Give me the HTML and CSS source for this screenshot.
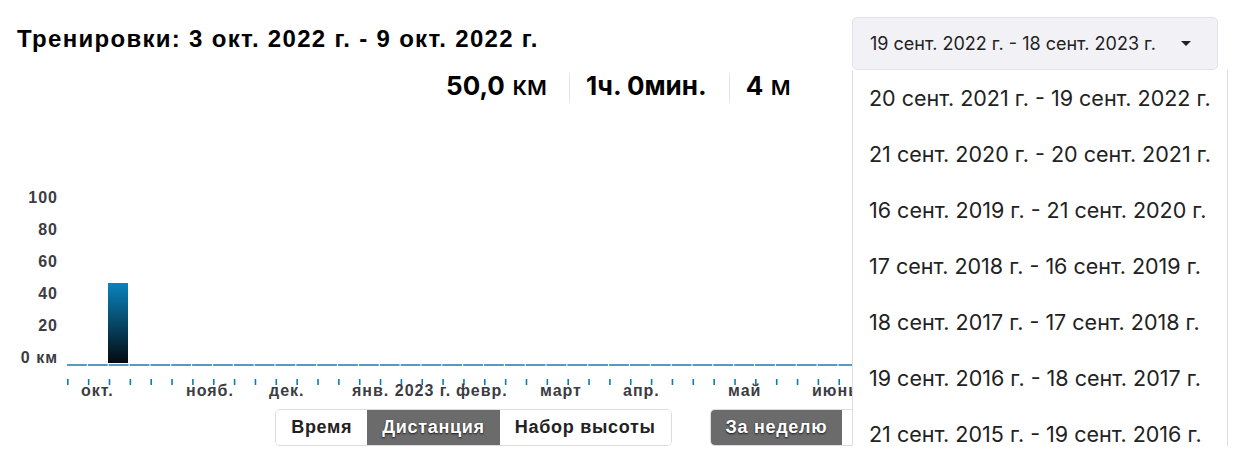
FILE: index.html
```html
<!DOCTYPE html>
<html lang="ru">
<head>
<meta charset="utf-8">
<title>Тренировки</title>
<link rel="stylesheet" href="styles.css">
</head>
<body>
<div class="widget">
  <div class="header">
    <h2 class="title">Тренировки: 3 окт. 2022 г. - 9 окт. 2022 г.</h2>
    <div class="range-select">
      <button class="range-btn" type="button">
        <span>19 сент. 2022 г. - 18 сент. 2023 г.</span>
        <svg class="caret" width="10" height="5" viewBox="0 0 10 5"><path d="M0 0H10L5 5Z" fill="#222"/></svg>
      </button>
      <ul class="range-menu">
        <li>20 сент. 2021 г. - 19 сент. 2022 г.</li>
        <li>21 сент. 2020 г. - 20 сент. 2021 г.</li>
        <li>16 сент. 2019 г. - 21 сент. 2020 г.</li>
        <li>17 сент. 2018 г. - 16 сент. 2019 г.</li>
        <li>18 сент. 2017 г. - 17 сент. 2018 г.</li>
        <li>19 сент. 2016 г. - 18 сент. 2017 г.</li>
        <li>21 сент. 2015 г. - 19 сент. 2016 г.</li>
      </ul>
    </div>
  </div>

  <div class="stats">
    <div class="stat"><b>50,0</b> <span class="unit">км</span></div>
    <div class="stat"><b>1ч. 0мин.</b></div>
    <div class="stat"><b>4</b> <span class="unit">м</span></div>
  </div>

  <svg class="chart" width="1248" height="297" viewBox="0 103 1248 297">
    <defs>
      <linearGradient id="barGrad" x1="0" y1="0" x2="0" y2="1">
        <stop offset="0" stop-color="#0a84be"/>
        <stop offset="1" stop-color="#030b10"/>
      </linearGradient>
    </defs>
    <g class="ylabels">
      <text x="58" y="203">100</text>
      <text x="58" y="235">80</text>
      <text x="58" y="267">60</text>
      <text x="58" y="299">40</text>
      <text x="58" y="331">20</text>
      <text x="58" y="363">0 км</text>
    </g>
    <rect x="108" y="283" width="20" height="80" fill="url(#barGrad)"/>
    <line class="axis" x1="67" y1="365" x2="1218" y2="365"/>
    <g class="ticks" id="ticks"></g>
    <g class="xlabels">
      <text x="81" y="396">окт.</text>
      <text x="186" y="396">нояб.</text>
      <text x="269" y="396">дек.</text>
      <text x="352" y="396">янв. 2023 г.</text>
      <text x="456" y="396">февр.</text>
      <text x="540" y="396">март</text>
      <text x="623" y="396">апр.</text>
      <text x="728" y="396">май</text>
      <text x="812" y="396">июнь</text>
    </g>
  </svg>

  <div class="controls">
    <div class="seg">
      <button class="seg-btn" type="button">Время</button>
      <button class="seg-btn active" type="button">Дистанция</button>
      <button class="seg-btn" type="button">Набор высоты</button>
    </div>
    <div class="seg">
      <button class="seg-btn active" type="button">За неделю</button>
      <button class="seg-btn" type="button">За месяц</button>
    </div>
  </div>
</div>
<script>
  (function () {
    var g = document.getElementById('ticks');
    var ns = 'http://www.w3.org/2000/svg';
    for (var i = 0; i < 56; i++) {
      var x = 67 + i * 20.85;
      var r = document.createElementNS(ns, 'rect');
      r.setAttribute('x', x.toFixed(2));
      r.setAttribute('y', '379');
      r.setAttribute('width', '1.6');
      r.setAttribute('height', '6');
      g.appendChild(r);
    }
  })();
</script>
</body>
</html>
```

FILE: styles.css
```css
html, body {
  margin: 0;
  padding: 0;
  overflow: hidden;
  background: #ffffff;
}

body {
  font-family: "Liberation Sans", Arial, sans-serif;
  color: #111;
}

.widget {
  padding: 17px 30px 0 17px;
}

.header {
  display: flex;
  justify-content: space-between;
  align-items: flex-start;
  height: 53px;
}

.title {
  margin: 9px 0 0 0;
  font-size: 24px;
  line-height: 26px;
  font-weight: 700;
  letter-spacing: 1.3px;
  color: #000;
  white-space: nowrap;
}

.range-select {
  position: relative;
  width: 366px;
}

.range-btn {
  display: flex;
  align-items: center;
  justify-content: space-between;
  width: 366px;
  height: 53px;
  box-sizing: border-box;
  padding: 0 26px 0 17px;
  background: #f2f1f6;
  border: 1px solid #e3e2ea;
  border-radius: 5px;
  font-family: Inter, "Noto Sans", sans-serif;
  font-size: 18px;
  color: #222;
  white-space: nowrap;
}

.caret {
  display: block;
}

.range-menu {
  position: absolute;
  top: 53px;
  left: 0;
  width: 376px;
  box-sizing: border-box;
  margin: 0;
  padding: 0 0 20px 0;
  list-style: none;
  background: #fff;
  border: 1px solid #dedde4;
  border-top: none;
  z-index: 5;
}

.range-menu li {
  height: 56px;
  line-height: 56px;
  padding-left: 16px;
  font-family: Inter, "Noto Sans", sans-serif;
  font-size: 21.5px;
  color: #222;
  white-space: nowrap;
}

.stats {
  display: flex;
  justify-content: center;
  margin-top: 3px;
  padding-left: 8px;
}

.stat {
  font-family: Inter, "Noto Sans", sans-serif;
  font-size: 26px;
  line-height: 26px;
  padding: 0 22px 4px 16px;
  color: #000;
  white-space: nowrap;
}

.stat + .stat {
  border-left: 1px solid #e3e3e8;
}

.stat b {
  font-weight: 700;
}

.stat .unit {
  font-weight: 500;
}

.chart {
  display: block;
  margin: 0 -30px 0 -17px;
}

.chart text {
  font-family: "Liberation Sans", Arial, sans-serif;
  font-weight: 700;
  font-size: 16px;
  letter-spacing: 1px;
  fill: #3c3c42;
}

.ylabels text {
  text-anchor: end;
}

.axis {
  stroke: #1c7aad;
  stroke-width: 1.5;
  stroke-dasharray: 19.85 1;
}

.ticks rect {
  fill: #0b7db6;
}

.controls {
  display: flex;
  justify-content: center;
  gap: 38px;
  margin-top: 9px;
}

.seg {
  display: flex;
  border: 1px solid #dcdce2;
  border-radius: 5px;
  overflow: hidden;
}

.seg-btn {
  height: 35px;
  padding: 0 15px;
  border: none;
  background: #fff;
  font-family: "Liberation Sans", Arial, sans-serif;
  font-weight: 700;
  font-size: 18px;
  letter-spacing: 0.7px;
  color: #222;
  white-space: nowrap;
}

.seg-btn.active {
  background: #6b6b6b;
  color: #fff;
  text-shadow: 0 1px 2px rgba(0, 0, 0, 0.8);
}
```
